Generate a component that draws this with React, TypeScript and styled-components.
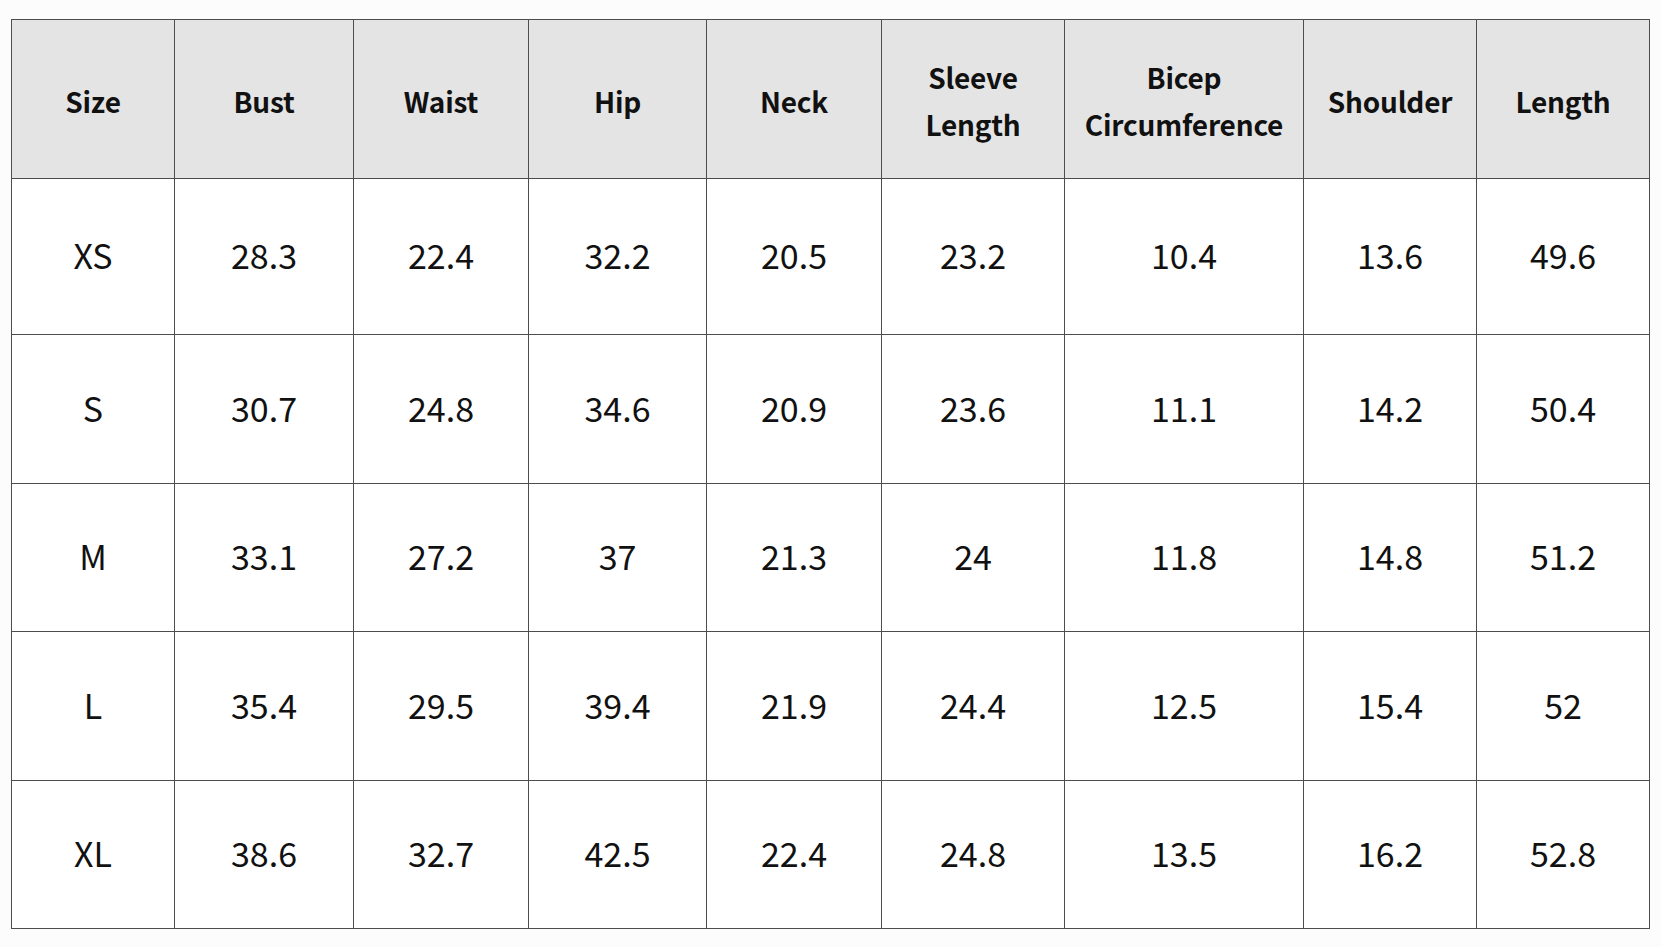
import React from "react";
import styled, { createGlobalStyle } from "styled-components";

const Global = createGlobalStyle`
  html, body { margin: 0; padding: 0; background: #fcfcfc; }
  body { font-family: "Noto Sans CJK JP", "Noto Sans", sans-serif; color: #111; }
`;

const Page = styled.div`
  padding: 19px 0 0 11px;
`;

const Table = styled.table`
  border-collapse: collapse;
  table-layout: fixed;
  width: 1639px;
  background: #fff;
`;

const HeadCell = styled.th`
  height: 154px;
  padding: 4px 4px 0;
  background: #e4e4e4;
  border: 1.5px solid #4d4d4d;
  font-weight: 700;
  font-size: 28px;
  letter-spacing: -0.2px;
  line-height: 47px;
  text-align: center;
  vertical-align: middle;
  color: #111;
`;

const Cell = styled.td<{ $h: number }>`
  height: ${(p) => p.$h - 4}px;
  padding: 0 0 4px;
  border: 1.5px solid #4d4d4d;
  font-weight: 400;
  font-size: 34px;
  text-align: center;
  vertical-align: middle;
  color: #111;
`;

const widths = [163, 179, 175, 178, 175, 183, 239, 173, 173];
const headers = [
  ["Size"],
  ["Bust"],
  ["Waist"],
  ["Hip"],
  ["Neck"],
  ["Sleeve", "Length"],
  ["Bicep", "Circumference"],
  ["Shoulder"],
  ["Length"],
];
const rows = [
  ["XS", "28.3", "22.4", "32.2", "20.5", "23.2", "10.4", "13.6", "49.6"],
  ["S", "30.7", "24.8", "34.6", "20.9", "23.6", "11.1", "14.2", "50.4"],
  ["M", "33.1", "27.2", "37", "21.3", "24", "11.8", "14.8", "51.2"],
  ["L", "35.4", "29.5", "39.4", "21.9", "24.4", "12.5", "15.4", "52"],
  ["XL", "38.6", "32.7", "42.5", "22.4", "24.8", "13.5", "16.2", "52.8"],
];
const heights = [155, 148, 147, 148, 147];

export default function App() {
  return (
    <>
      <Global />
      <Page>
        <Table>
          <colgroup>
            {widths.map((w, i) => (
              <col key={i} style={{ width: w }} />
            ))}
          </colgroup>
          <thead>
            <tr>
              {headers.map((h, i) => (
                <HeadCell key={i}>
                  {h.map((line, j) => (
                    <React.Fragment key={j}>
                      {j > 0 && <br />}
                      {line}
                    </React.Fragment>
                  ))}
                </HeadCell>
              ))}
            </tr>
          </thead>
          <tbody>
            {rows.map((r, i) => (
              <tr key={i}>
                {r.map((v, j) => (
                  <Cell key={j} $h={heights[i]}>
                    {v}
                  </Cell>
                ))}
              </tr>
            ))}
          </tbody>
        </Table>
      </Page>
    </>
  );
}
